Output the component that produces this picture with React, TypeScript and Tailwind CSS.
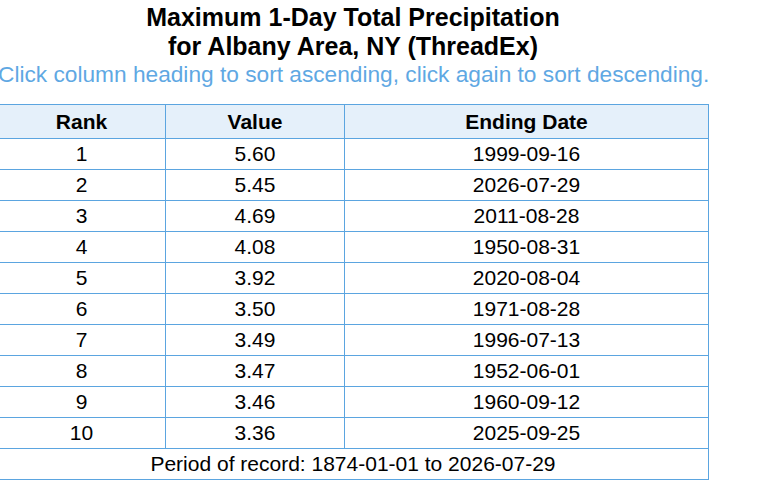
const rows: [number, string, string][] = [
  [1, '5.60', '1999-09-16'],
  [2, '5.45', '2026-07-29'],
  [3, '4.69', '2011-08-28'],
  [4, '4.08', '1950-08-31'],
  [5, '3.92', '2020-08-04'],
  [6, '3.50', '1971-08-28'],
  [7, '3.49', '1996-07-13'],
  [8, '3.47', '1952-06-01'],
  [9, '3.46', '1960-09-12'],
  [10, '3.36', '2025-09-25'],
];

export default function App() {
  return (
    <div className="min-h-screen bg-white text-black font-['Liberation_Sans',Arial,sans-serif]">
      <div className="w-[706px] text-center">
        {/* Title */}
        <h1 className="pt-[3px] text-[25px] font-bold leading-[29px]">
          Maximum 1-Day Total Precipitation
          <br />
          for Albany Area, NY (ThreadEx)
        </h1>
        <p className="-ml-[2px] text-[22.7px] leading-[26px] text-[#5fa8e3] whitespace-nowrap">
          Click column heading to sort ascending, click again to sort descending.
        </p>

        {/* Table */}
        <table className="mt-[17px] -ml-[3px] w-[712px] border-collapse text-[21px]">
          <thead>
            <tr className="bg-[#e5f0fa] leading-[33px]">
              <th className="w-[168px] border border-[#5ba5e0] p-0 font-bold">Rank</th>
              <th className="w-[179px] border border-[#5ba5e0] p-0 font-bold">Value</th>
              <th className="border border-[#5ba5e0] p-0 font-bold">Ending Date</th>
            </tr>
          </thead>
          <tbody className="leading-[30px]">
            {rows.map(([rank, value, date]) => (
              <tr key={rank}>
                <td className="border border-[#5ba5e0] p-0">{rank}</td>
                <td className="border border-[#5ba5e0] p-0">{value}</td>
                <td className="border border-[#5ba5e0] p-0">{date}</td>
              </tr>
            ))}
            <tr>
              <td colSpan={3} className="border border-[#5ba5e0] p-0">
                Period of record: 1874-01-01 to 2026-07-29
              </td>
            </tr>
          </tbody>
        </table>
      </div>
    </div>
  );
}
